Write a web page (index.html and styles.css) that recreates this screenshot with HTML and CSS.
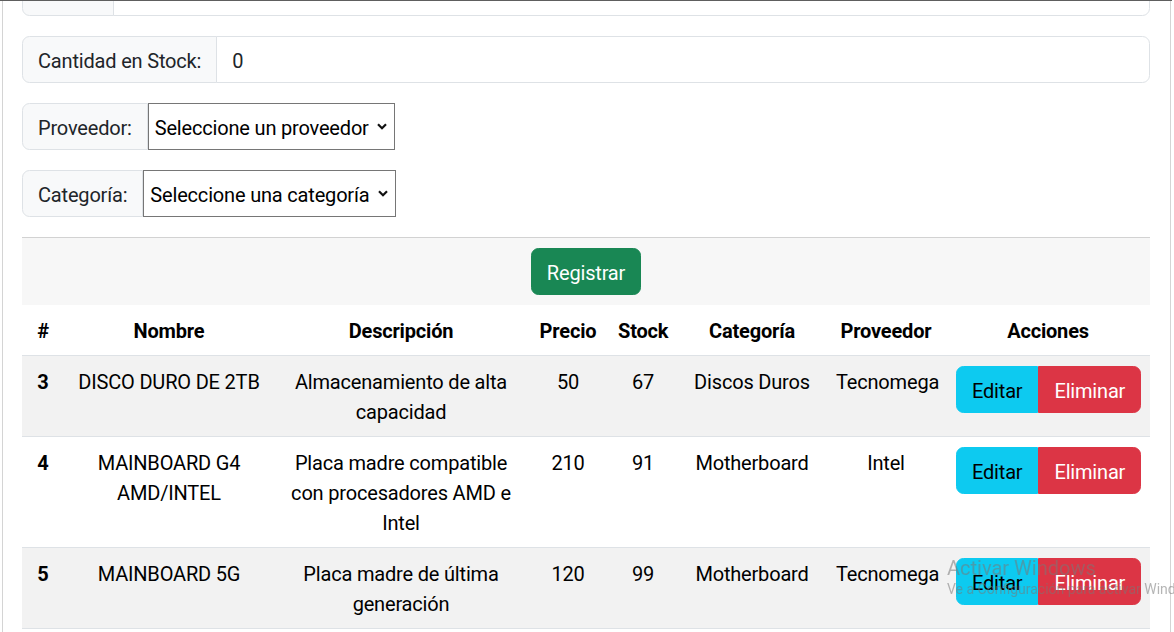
FILE: index.html
```html
<!DOCTYPE html>
<html lang="es">
<head>
<meta charset="utf-8">
<title>Productos</title>
<link rel="stylesheet" href="styles.css">
</head>
<body>
<div class="topline"></div>
<div class="frame">
  <form class="product-form">
    <div class="group">
      <span class="group-label">Precio:</span>
      <input class="group-input" type="text" value="">
    </div>
    <div class="group">
      <span class="group-label">Cantidad en Stock:</span>
      <input class="group-input" type="text" value="0">
    </div>
    <div class="group">
      <span class="group-label">Proveedor:</span>
      <span class="select-wrap">
        <select class="select"><option>Seleccione un proveedor</option></select>
        <svg class="chev" width="10" height="7" viewBox="0 0 10 7"><path d="M1 1.2 L5 5.2 L9 1.2" fill="none" stroke="#111" stroke-width="2.2"/></svg>
      </span>
    </div>
    <div class="group">
      <span class="group-label">Categoría:</span>
      <span class="select-wrap">
        <select class="select"><option>Seleccione una categoría</option></select>
        <svg class="chev" width="10" height="7" viewBox="0 0 10 7"><path d="M1 1.2 L5 5.2 L9 1.2" fill="none" stroke="#111" stroke-width="2.2"/></svg>
      </span>
    </div>
    <div class="form-footer">
      <button type="button" class="btn btn-success">Registrar</button>
    </div>
  </form>
  <table class="table">
    <colgroup>
      <col class="c-id"><col class="c-name"><col class="c-desc"><col class="c-price"><col class="c-stock"><col class="c-cat"><col class="c-prov"><col class="c-act">
    </colgroup>
    <thead>
      <tr><th>#</th><th>Nombre</th><th>Descripción</th><th>Precio</th><th>Stock</th><th>Categoría</th><th>Proveedor</th><th>Acciones</th></tr>
    </thead>
    <tbody>
      <tr class="striped">
        <th>3</th><td>DISCO DURO DE 2TB</td><td>Almacenamiento de alta capacidad</td><td>50</td><td>67</td><td>Discos Duros</td><td>Tecnomega</td>
        <td><div class="btn-group"><button class="btn btn-info">Editar</button><button class="btn btn-danger">Eliminar</button></div></td>
      </tr>
      <tr>
        <th>4</th><td>MAINBOARD G4 AMD/INTEL</td><td>Placa madre compatible con procesadores AMD e Intel</td><td>210</td><td>91</td><td>Motherboard</td><td>Intel</td>
        <td><div class="btn-group"><button class="btn btn-info">Editar</button><button class="btn btn-danger">Eliminar</button></div></td>
      </tr>
      <tr class="striped">
        <th>5</th><td>MAINBOARD 5G</td><td>Placa madre de última generación</td><td>120</td><td>99</td><td>Motherboard</td><td>Tecnomega</td>
        <td><div class="btn-group"><button class="btn btn-info">Editar</button><button class="btn btn-danger">Eliminar</button></div></td>
      </tr>
    </tbody>
  </table>
</div>
<div class="watermark">
  <div class="wm-title">Activar Windows</div>
  <div class="wm-sub">Ve a Configuración para activar Windows.</div>
</div>
</body>
</html>
```

FILE: styles.css
```css
html, body {
  margin: 0;
  padding: 0;
  background: #fff;
  overflow: hidden;
}
body {
  font-family: "Segoe UI", Roboto, "Liberation Sans", sans-serif;
  font-size: 20px;
  line-height: 30px;
  letter-spacing: -0.18px;
  color: #212529;
}
.topline {
  position: fixed;
  top: 0;
  left: 0;
  width: 1172px;
  height: 1px;
  background: #5e5e5e;
  z-index: 5;
}
.frame {
  box-sizing: border-box;
  width: 1169px;
  margin: -31px 0 0 2px;
  padding: 0 20px 0 19px;
  border-left: 1px solid #d4d4d4;
  border-right: 1px solid #d4d4d4;
  min-height: 700px;
}
.product-form {
  margin: 0;
}
.group {
  display: flex;
  align-items: stretch;
  margin-bottom: 20px;
}
.group-label {
  display: flex;
  align-items: center;
  padding: 8.5px 15px 6.5px;
  background: #f8f9fa;
  border: 1px solid #dee2e6;
  border-radius: 7.5px 0 0 7.5px;
  white-space: nowrap;
  color: #212529;
}
.group-input {
  flex: 1;
  min-width: 0;
  margin: 0 0 0 -1px;
  padding: 8.5px 15px 6.5px;
  font: inherit;
  letter-spacing: inherit;
  color: #212529;
  border: 1px solid #dee2e6;
  border-radius: 0 7.5px 7.5px 0;
  background: #fff;
  outline: none;
}
.select-wrap {
  position: relative;
  display: flex;
}
.select {
  appearance: none;
  -webkit-appearance: none;
  margin: 0;
  padding: 2px 25px 0 6px;
  font: inherit;
  letter-spacing: inherit;
  color: #000;
  background: #fff;
  border: 1px solid #767676;
  border-radius: 0;
}
.chev {
  position: absolute;
  right: 8px;
  top: 20px;
  pointer-events: none;
}
.form-footer {
  display: flex;
  justify-content: center;
  padding: 10px 20px;
  background: #f7f7f7;
  border-top: 1px solid #d2d2d2;
}
.btn {
  font: inherit;
  letter-spacing: inherit;
  line-height: 30px;
  padding: 8.5px 15px 6.5px;
  border: 1px solid transparent;
  border-radius: 7.5px;
  cursor: pointer;
}
.btn-success {
  background: #198754;
  border-color: #198754;
  color: #fff;
}
.btn-group {
  display: inline-flex;
}
.btn-group .btn-info {
  border-radius: 7.5px 0 0 7.5px;
}
.btn-group .btn-danger {
  border-radius: 0 7.5px 7.5px 0;
}
.btn-info {
  background: #0dcaf0;
  border-color: #0dcaf0;
  color: #000;
}
.btn-danger {
  background: #dc3545;
  border-color: #dc3545;
  color: #fff;
}
.table {
  width: 100%;
  border-collapse: collapse;
  table-layout: fixed;
}
.c-id { width: 42px; }
.c-name { width: 210px; }
.c-desc { width: 254px; }
.c-price { width: 80px; }
.c-stock { width: 70px; }
.c-cat { width: 148px; }
.c-prov { width: 120px; }
.c-act { width: 204px; }
.table th,
.table td {
  padding: 11px 10px 9px;
  text-align: center;
  vertical-align: top;
  border-bottom: 1px solid #dee2e6;
  color: #000;
}
.table td:last-child {
  padding-top: 10px;
  padding-bottom: 10px;
}
.table th {
  font-weight: 700;
}
.table tr.striped > * {
  background: #f2f2f2;
}
.watermark {
  position: fixed;
  left: 947px;
  top: 556px;
  color: rgba(120, 120, 120, 0.55);
  white-space: nowrap;
  pointer-events: none;
  z-index: 10;
  letter-spacing: 0;
}
.wm-title {
  font-size: 20px;
  line-height: 24px;
}
.wm-sub {
  font-size: 14px;
  line-height: 18px;
}
```
